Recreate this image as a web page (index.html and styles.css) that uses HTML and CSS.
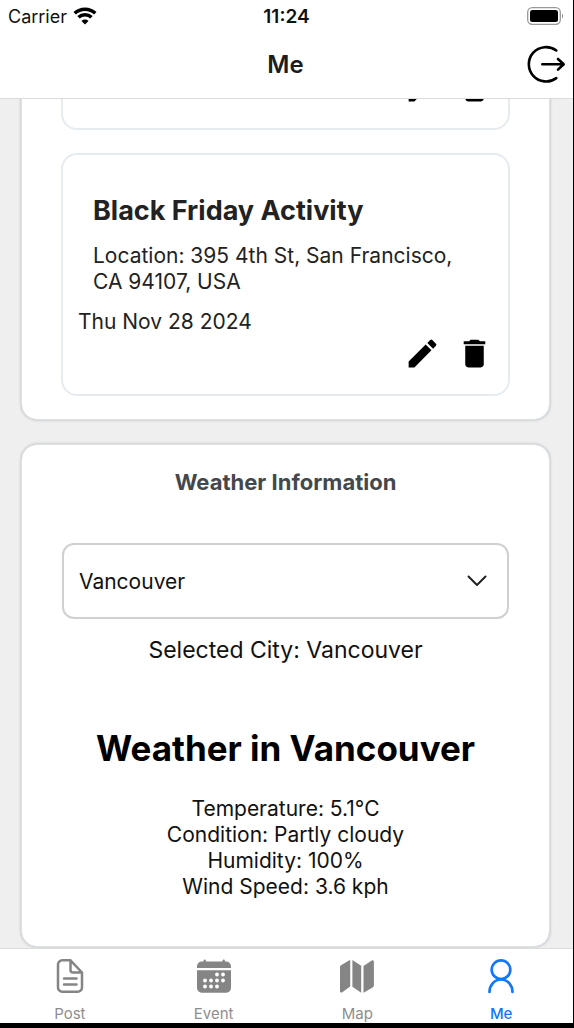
FILE: index.html
```html
<!DOCTYPE html>
<html lang="en">
<head>
<meta charset="utf-8">
<meta name="viewport" content="width=device-width, initial-scale=1">
<title>Me</title>
<link rel="stylesheet" href="styles.css">
</head>
<body>
<svg class="defs" aria-hidden="true">
  <symbol id="edit" viewBox="0 0 24 24"><path d="M3 17.25V21h3.750L17.810 9.940l-3.750-3.750L3 17.250zM20.710 7.040a.996.996 0 0 0 0-1.410l-2.340-2.340a.996.996 0 0 0-1.410 0l-1.830 1.830 3.750 3.750 1.830-1.830z"/></symbol>
  <symbol id="trash" viewBox="0 0 24 24"><path d="M6 19c0 1.100.9 2 2 2h8c1.100 0 2-.9 2-2V7H6v12zM19 4h-3.500l-1-1h-5l-1 1H5v2h14V4z"/></symbol>
</svg>
<div class="screen">
  <header class="top">
    <div class="status">
      <div class="carrier">
        <span>Carrier</span>
        <svg width="24" height="18" viewBox="0 0 24 18" aria-hidden="true">
          <path d="M1.700 6.300a15 15 0 0 1 20.600 0M5.500 10.300a9.500 9.500 0 0 1 13 0" fill="none" stroke="#000" stroke-width="3.500"/>
          <path d="M12 17.500l-3.500-3.600a5 5 0 0 1 7 0z"/>
        </svg>
      </div>
      <time class="clock">11:24</time>
      <svg class="battery" width="38" height="18" viewBox="0 0 38 18" aria-hidden="true">
        <rect x=".7" y=".7" width="32.600" height="16.600" rx="4.500" fill="none" stroke="#999" stroke-width="1.300"/>
        <rect x="3" y="3" width="28" height="12" rx="2.500"/>
        <path d="M35 6.500q2.200 2.500 0 5z" fill="#888"/>
      </svg>
    </div>
    <div class="bar">
      <h1 class="bar-title">Me</h1>
      <button class="logout" aria-label="Log out">
        <svg width="42" height="40" viewBox="0 0 42 40" fill="none" stroke="#000" stroke-width="2.600" stroke-linecap="round" stroke-linejoin="round"><path d="M31.300 6.500A17.200 17.200 0 1 0 31.300 34.100M17.300 20.300H38.500M33 15l5.700 5.300L33 25.600"/></svg>
      </button>
    </div>
  </header>

  <main class="content">
    <section class="card">
      <article class="event">
        <div class="actions">
          <button class="icon-btn" aria-label="Edit"><svg class="icon"><use href="#edit"/></svg></button>
          <button class="icon-btn" aria-label="Delete"><svg class="icon"><use href="#trash"/></svg></button>
        </div>
      </article>
      <article class="event">
        <h2 class="event-title">Black Friday Activity</h2>
        <p class="event-place">Location: 395 4th St, San Francisco, CA 94107, USA</p>
        <p class="event-date">Thu Nov 28 2024</p>
        <div class="actions">
          <button class="icon-btn" aria-label="Edit"><svg class="icon"><use href="#edit"/></svg></button>
          <button class="icon-btn" aria-label="Delete"><svg class="icon"><use href="#trash"/></svg></button>
        </div>
      </article>
    </section>

    <section class="card weather">
      <h2 class="weather-label">Weather Information</h2>
      <div class="picker">
        <select class="picker-select" aria-label="City"><option>Vancouver</option></select>
        <svg class="chevron" width="22" height="14" viewBox="0 0 22 14" aria-hidden="true"><path d="M2.500 2.500L11 11l8.500-8.500" fill="none" stroke="#222" stroke-width="2" stroke-linecap="round" stroke-linejoin="round"/></svg>
      </div>
      <p class="selected">Selected City: Vancouver</p>
      <h3 class="weather-title">Weather in Vancouver</h3>
      <p class="reading">Temperature: 5.1°C</p>
      <p class="reading">Condition: Partly cloudy</p>
      <p class="reading">Humidity: 100%</p>
      <p class="reading">Wind Speed: 3.6 kph</p>
    </section>
  </main>

  <nav class="tabs">
    <a class="tab" href="#post">
      <svg width="36" height="36" viewBox="-4 0 36 36" fill="none" stroke="#858585" stroke-width="2.500" stroke-linecap="round" stroke-linejoin="round"><path d="M14.500 2.300H6.200A4.200 4.200 0 0 0 2 6.500V29.500a4.200 4.200 0 0 0 4.200 4.200H21.800A4.200 4.200 0 0 0 26 29.500V14.500zM14.500 2.300V12a2.500 2.500 0 0 0 2.500 2.500H26M8 20.500H20.500M8 26.500H20.500"/></svg>
      <span>Post</span>
    </a>
    <a class="tab" href="#event">
      <svg width="36" height="36" viewBox="0 0 36 36" fill="#858585"><path d="M1 10V8.300A4.700 4.700 0 0 1 5.700 3.600H7.500V2.800a1.200 1.200 0 0 1 2.400 0V3.600H26.500V2.800a1.200 1.200 0 0 1 2.400 0V3.600H30.300A4.700 4.700 0 0 1 35 8.300V10zM1 12.300H35V30a4.700 4.700 0 0 1-4.700 4.700H5.700A4.700 4.700 0 0 1 1 30z"/><g fill="#fff"><circle cx="21" cy="16.500" r="1.900"/><circle cx="27" cy="16.500" r="1.900"/><circle cx="9" cy="22.500" r="1.900"/><circle cx="15" cy="22.500" r="1.900"/><circle cx="21" cy="22.500" r="1.900"/><circle cx="27" cy="22.500" r="1.900"/><circle cx="9" cy="28.500" r="1.900"/><circle cx="15" cy="28.500" r="1.900"/><circle cx="21" cy="28.500" r="1.900"/></g></svg>
      <span>Event</span>
    </a>
    <a class="tab" href="#map">
      <svg width="36" height="36" viewBox="0 0 36 36" fill="#858585"><path d="M11.200 2V28.500L3 34.400Q1 35.200 1 33V9.200Q1 7.800 2 7.200L10 2.400zM13.400 2L22.200 7.800V34.700L13.400 28.800zM24.500 8L32.800 2.400Q34.900 1.500 34.900 3.700V27.300Q34.900 28.500 34 29.200L25.500 34.300L24.500 34.700z"/></svg>
      <span>Map</span>
    </a>
    <a class="tab active" href="#me" aria-current="page">
      <svg width="36" height="36" viewBox="0 0 36 36" fill="none" stroke="#1277fa" stroke-width="2.700" stroke-linecap="round"><circle cx="18" cy="11.700" r="9.300"/><path d="M6.500 34A11.500 12.500 0 0 1 29.500 34"/></svg>
      <span>Me</span>
    </a>
  </nav>
</div>
</body>
</html>
```

FILE: styles.css
```css
* { box-sizing: border-box; }

body {
  margin: 0;
  background: #000;
  color: #111;
  font-family: Inter, "Liberation Sans", sans-serif;
  overflow: hidden;
}

h1, h2, h3, p { margin: 0; }

button {
  border: 0;
  padding: 0;
  background: none;
  cursor: pointer;
}

svg { display: block; }

.defs {
  position: absolute;
  width: 0;
  height: 0;
}

.screen {
  display: flex;
  flex-direction: column;
  height: calc(100vh - 5px);
  margin: 0 1px 5px -2px;
  background: #efefef;
}

.top {
  flex: none;
  padding-bottom: 2px;
  background: #fff;
  border-bottom: 1px solid #dcdcdc;
}

.status,
.bar {
  display: grid;
  grid-template-columns: 1fr auto 1fr;
  align-items: center;
}

.status {
  height: 32px;
  padding: 0 8px 0 10px;
}

.carrier {
  display: flex;
  align-items: center;
  gap: 6px;
  font-size: 18px;
}

.clock {
  font-size: 19px;
  font-weight: 600;
}

.battery { justify-self: end; }

.bar {
  height: 64px;
  padding: 0 6px;
}

.bar-title {
  grid-column: 2;
  font-size: 24px;
  font-weight: 600;
  color: #1c1c1e;
}

.logout { justify-self: end; }

.content {
  flex: 1;
  min-height: 0;
  display: flex;
  flex-direction: column;
  justify-content: flex-end;
  gap: 24px;
  padding: 0 23px 1px;
  overflow: hidden;
}

.card {
  flex: none;
  display: flex;
  flex-direction: column;
  gap: 23px;
  padding: 23px 39px;
  background: #fff;
  border: 1px solid #dbe2e8;
  border-radius: 16px;
  box-shadow: 0 0 3px rgba(0, 0, 0, 0.25);
}

.event {
  padding: 40px 15px 22px;
  border: 2px solid #e6ebf0;
  border-radius: 16px;
  color: #222;
  font-size: 21px;
  line-height: 26px;
}

.event-title {
  padding: 0 15px;
  font-size: 27px;
  line-height: 32px;
}

.event-place {
  padding: 0 15px;
  margin-top: 16px;
}

.event-date { margin-top: 14px; }

.actions {
  display: flex;
  justify-content: flex-end;
  gap: 15px;
}

.icon {
  width: 37px;
  height: 37px;
}

.weather {
  gap: 0;
  padding-bottom: 46px;
  text-align: center;
}

.weather-label {
  font-size: 22px;
  line-height: 28px;
  color: #43484d;
}

.picker {
  display: grid;
  align-items: center;
  margin: 47px 1px 0;
}

.picker-select {
  grid-area: 1 / 1;
  width: 100%;
  height: 76px;
  padding: 0 15px;
  appearance: none;
  background: #fff;
  border: 2px solid #d0d0d0;
  border-radius: 12px;
  font: inherit;
  font-size: 21px;
  color: #111;
}

.chevron {
  grid-area: 1 / 1;
  justify-self: end;
  margin-right: 21px;
  pointer-events: none;
}

.selected {
  margin-top: 16px;
  font-size: 23px;
  line-height: 30px;
}

.weather-title {
  margin: 59px 0 24px;
  font-size: 35px;
  line-height: 48px;
  color: #000;
}

.reading {
  font-size: 21px;
  line-height: 26px;
}

.tabs {
  flex: none;
  display: grid;
  grid-template-columns: repeat(4, 1fr);
  background: #fff;
  border-top: 1px solid #dcdcdc;
}

.tab {
  display: flex;
  flex-direction: column;
  align-items: center;
  gap: 10px;
  padding-top: 9px;
  color: #8e8e8f;
  font-size: 15px;
  line-height: 19px;
  text-decoration: none;
}

.active {
  color: #1277fa;
  font-weight: 500;
}
```
